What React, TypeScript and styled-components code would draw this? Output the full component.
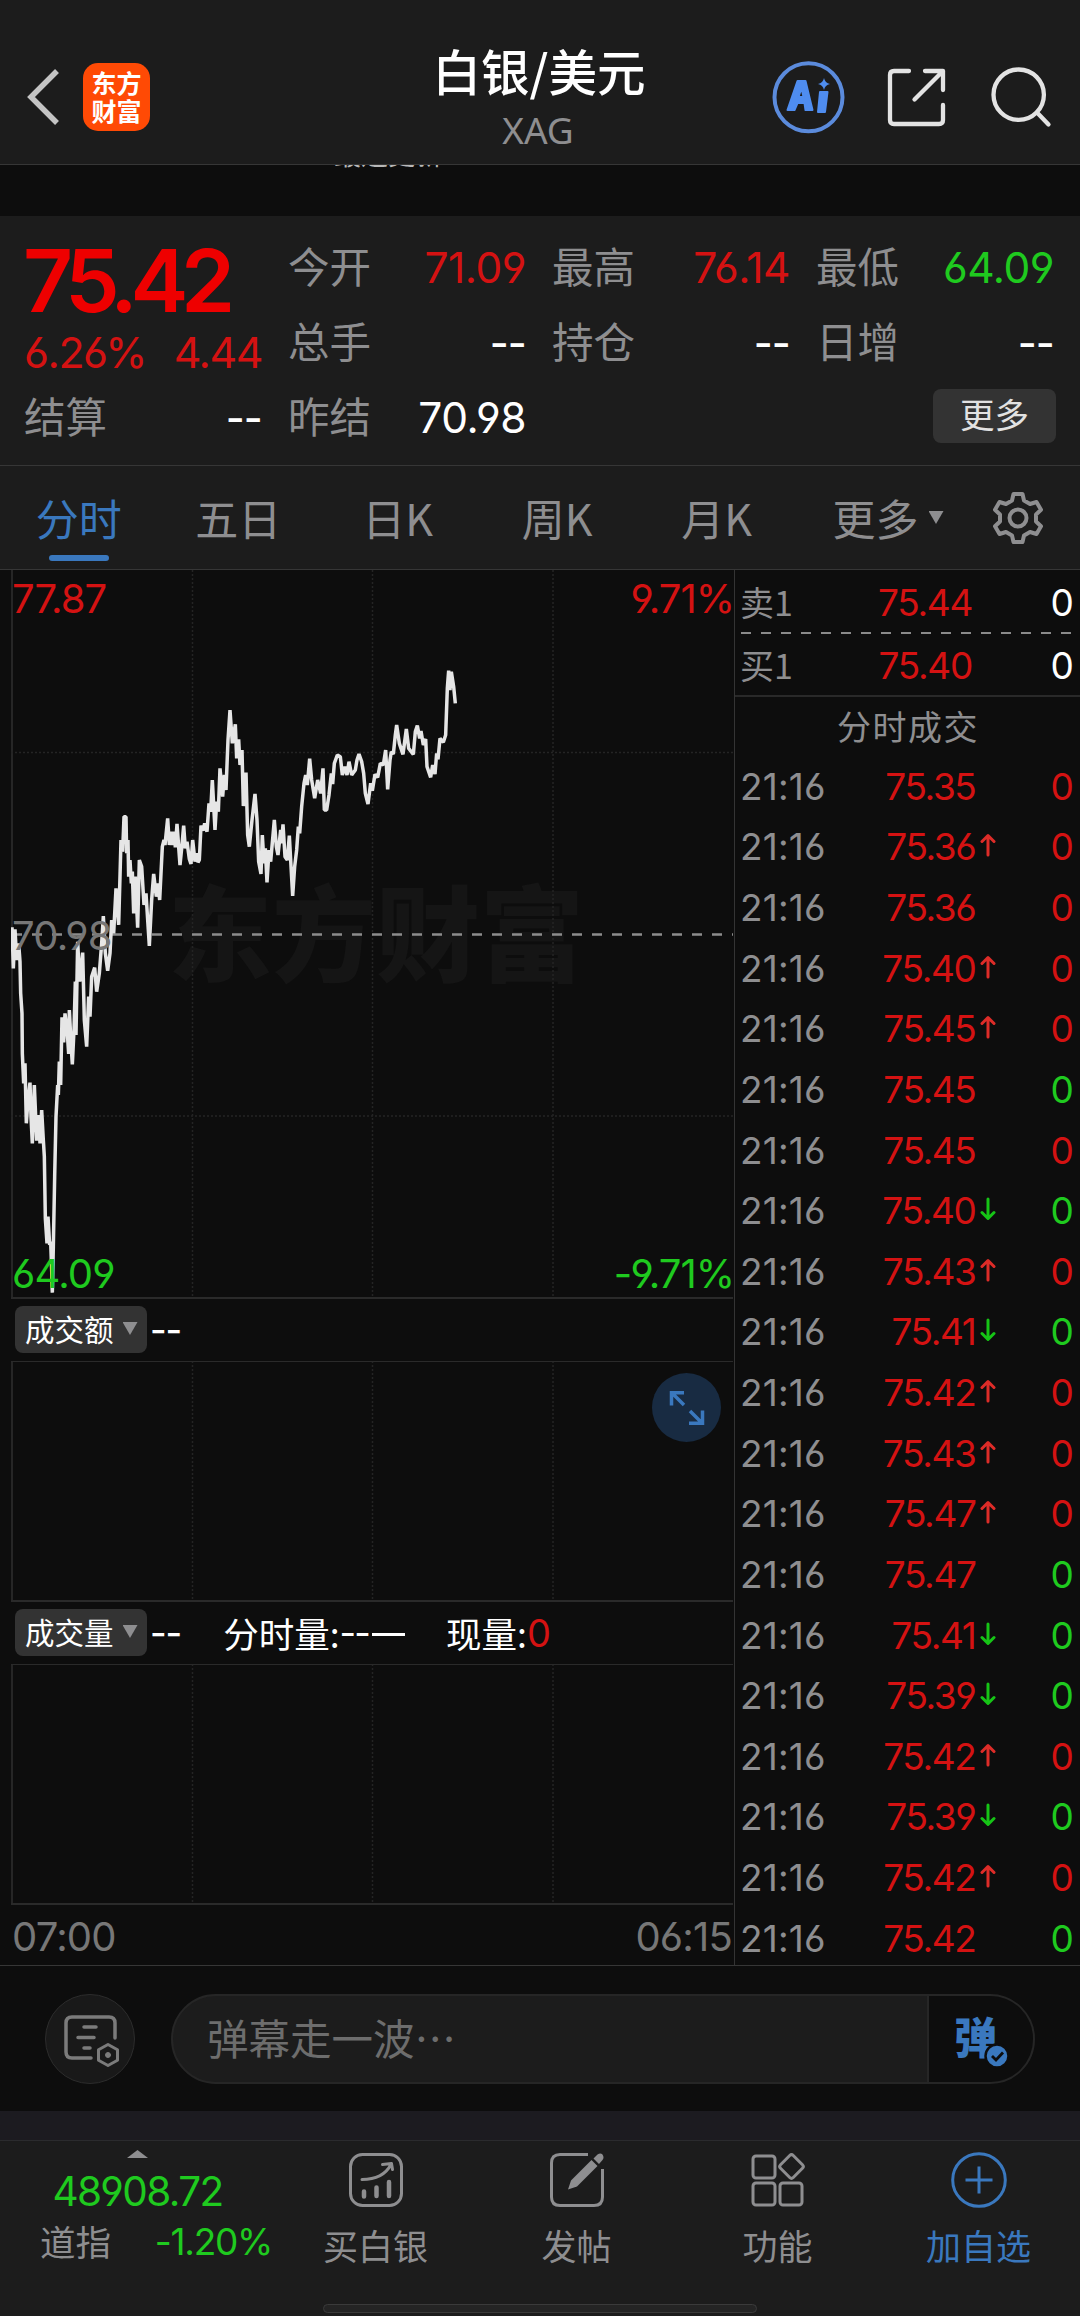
import React from "react";
import styled, { createGlobalStyle } from "styled-components";

const RED = "#d41212";
const GREEN = "#1fca1f";
const GREY = "#8e8e90";
const BLUE = "#3a78be";
const PANEL = "#1c1c1c";
const DARK = "#0d0d0d";
const LINE = "#363636";

const Global = createGlobalStyle`
  * { box-sizing: border-box; }
  body { margin: 0; background: ${DARK}; }
`;

const Screen = styled.div`
  width: 1080px;
  height: 2316px;
  overflow: hidden;
  display: flex;
  flex-direction: column;
  background: ${DARK};
  color: #fff;
  font-family: "Noto Sans", "Noto Sans CJK SC", sans-serif;
`;

const Num = styled.span<{ $size: number; $color?: string; $weight?: number; $ls?: number }>`
  font-family: Inter, sans-serif;
  font-feature-settings: "cv03", "cv04";
  font-size: ${(p) => p.$size}px;
  font-weight: ${(p) => p.$weight ?? 400};
  color: ${(p) => p.$color ?? "#fff"};
  letter-spacing: ${(p) => p.$ls ?? -0.02}em;
  line-height: 1;
  white-space: nowrap;
`;

const Cjk = styled.span<{ $size: number; $color?: string; $weight?: number }>`
  font-family: "Noto Sans CJK SC", sans-serif;
  font-size: ${(p) => p.$size}px;
  font-weight: ${(p) => p.$weight ?? 400};
  color: ${(p) => p.$color ?? GREY};
  line-height: 1.2;
  white-space: nowrap;
`;

/* ---------- header ---------- */
const Header = styled.header`
  flex: none;
  height: 165px;
  padding: 30px 28px 0 26px;
  display: grid;
  grid-template-columns: 1fr auto 1fr;
  background: ${PANEL};
  border-bottom: 1px solid ${LINE};
`;
const HeaderLeft = styled.div`
  display: flex;
  align-items: center;
  gap: 23px;
`;
const HeaderRight = styled.div`
  display: flex;
  align-items: center;
  justify-content: flex-end;
  padding-top: 6px;
`;
const Logo = styled.div`
  width: 67px;
  height: 68px;
  border-radius: 15px;
  background: #ff4a05;
  display: flex;
  flex-direction: column;
  align-items: center;
  justify-content: center;
  font: 700 25px/28px "Noto Sans CJK SC", sans-serif;
  padding-bottom: 2px;
`;
const Titles = styled.div`
  display: flex;
  flex-direction: column;
  align-items: center;
  padding-top: 10px;
`;
const Title = styled.div`
  font: 500 48.5px/60px "Noto Sans CJK SC", sans-serif;
`;
const Code = styled.div`
  font: 400 37px/44px "Noto Sans", sans-serif;
  color: ${GREY};
  padding: 8px 2px 0 0;
`;
const Ticker = styled.div`
  flex: none;
  height: 51px;
  overflow: hidden;
  display: flex;
  padding-left: 334px;
  color: #66666a;
  font: 400 27px/34px "Noto Sans CJK SC", sans-serif;
`;
const TickerText = styled.span`
  margin-top: -28px;
  white-space: pre;
`;
const TickerLabel = styled.span`
  color: #b8b8b8;
`;

/* ---------- quote ---------- */
const Quote = styled.section`
  flex: none;
  height: 250px;
  padding: 15px 26px 0;
  background: ${PANEL};
  border-bottom: 1px solid ${LINE};
  display: grid;
  grid-template-columns: repeat(4, 236px);
  grid-template-rows: 75px 75px 75px;
  column-gap: 28px;
`;
const Main = styled.div`
  grid-row: 1 / 3;
  padding-top: 7px;
  margin-left: -2px;
  display: flex;
  flex-direction: column;
`;
const BigPrice = styled.div`
  height: 86px;
  display: flex;
  align-items: center;
  padding-bottom: 1px;
  margin-left: -1px;
`;
const Change = styled.div`
  display: flex;
  justify-content: space-between;
  align-items: center;
  height: 66px;
`;
const Stat = styled.div`
  display: flex;
  justify-content: space-between;
  align-items: center;
`;
const StatLabel = styled(Cjk)`
  margin: -5px 0 0 -2px;
`;
const MoreCell = styled.div`
  grid-column: 4;
  display: flex;
  justify-content: flex-end;
  align-items: center;
  margin-right: -2px;
`;
const MoreButton = styled.button`
  width: 123px;
  height: 54px;
  padding: 0 0 4px;
  border: 0;
  border-radius: 8px;
  background: #333;
  color: #e2e2e2;
  margin-bottom: 6px;
  font: 400 34.5px/1.2 "Noto Sans CJK SC", sans-serif;
`;

/* ---------- tabs ---------- */
const Tabs = styled.nav`
  flex: none;
  height: 104px;
  background: ${PANEL};
  border-bottom: 1px solid ${LINE};
  display: flex;
  align-items: stretch;
`;
const Tab = styled.div<{ $on?: boolean }>`
  width: 159.5px;
  padding: 21px 2px 0 0;
  display: flex;
  flex-direction: column;
  align-items: center;
  justify-content: space-between;
  color: ${(p) => (p.$on ? BLUE : GREY)};
  font: 400 43px/60px "Noto Sans CJK SC", sans-serif;
`;
const TabBar = styled.i`
  width: 60px;
  height: 6px;
  border-radius: 3px;
  background: ${BLUE};
  margin-bottom: 8px;
`;
const MoreTab = styled.div`
  flex: 1;
  display: flex;
  align-items: center;
  padding: 0 35px 0 35px;
`;
const Triangle = styled.i<{ $w: number; $h: number; $up?: boolean; $ml?: number }>`
  width: ${(p) => p.$w}px;
  height: ${(p) => p.$h}px;
  margin-left: ${(p) => p.$ml ?? 0}px;
  background: ${GREY};
  clip-path: ${(p) => (p.$up ? "polygon(50% 0, 100% 100%, 0 100%)" : "polygon(0 0, 100% 0, 50% 100%)")};
`;
const Gear = styled.svg`
  margin-left: auto;
`;

/* ---------- body ---------- */
const Body = styled.main`
  flex: none;
  height: 1396px;
  display: flex;
  border-bottom: 1px solid ${LINE};
`;
const Charts = styled.div`
  width: 735px;
  border-right: 1px solid #343434;
  display: flex;
  flex-direction: column;
  padding-left: 11px;
`;
const PricePlot = styled.div`
  position: relative;
  height: 729px;
`;
const SubPlot = styled.div`
  position: relative;
  height: 241px;
`;
const PlotSvg = styled.svg`
  display: block;
  position: absolute;
  inset: 0;
`;
const Watermark = styled.div`
  position: absolute;
  left: 157px;
  top: 284px;
  font: 900 104px/150px "Noto Sans CJK SC", sans-serif;
  color: #151515;
`;
const PlotLabel = styled.div<{ $top: number; $right?: boolean }>`
  position: absolute;
  top: ${(p) => p.$top}px;
  ${(p) => (p.$right ? "right: 0;" : "left: 1px;")}
  display: flex;
`;
const SubHead = styled.div`
  height: 62px;
  padding: 0 0 1px 4px;
  display: flex;
  align-items: center;
  color: #fff;
`;
const Chip = styled.div`
  width: 132px;
  height: 47px;
  border-radius: 8px;
  background: #333;
  display: flex;
  align-items: center;
  gap: 9px;
  padding: 0 0 2px 10px;
  margin-right: 3px;
`;
const Metric = styled.div<{ $ml: number }>`
  margin-left: ${(p) => p.$ml}px;
  display: flex;
  align-items: center;
  font: 400 35.5px/44px "Noto Sans CJK SC", sans-serif;
`;
const LongDash = styled.span`
  width: 33px;
  height: 3px;
  overflow: hidden;
  background: #fff;
  color: transparent;
  margin: 4px 0 0 3px;
`;
const Expand = styled.div`
  position: absolute;
  left: 641px;
  top: 12px;
  width: 69px;
  height: 69px;
  border-radius: 50%;
  background: #182b42;
`;
const Axis = styled.div`
  flex: 1;
  display: flex;
  justify-content: space-between;
  align-items: center;
  padding: 4px 2px 0 1px;
`;

const Book = styled.aside`
  flex: 1;
  display: flex;
  flex-direction: column;
  overflow: hidden;
`;
const BookTop = styled.div`
  flex: none;
  height: 127px;
  border-bottom: 2px solid #292929;
  display: flex;
  flex-direction: column;
`;
const Dashes = styled.i`
  height: 2px;
  margin: 0 6px;
  background: repeating-linear-gradient(90deg, #8a8a8a 0 10px, transparent 10px 20px);
`;
const Row = styled.div<{ $priceEnd: number }>`
  flex: 1;
  display: grid;
  grid-template-columns: 100px ${(p) => p.$priceEnd - 105}px 24px 1fr;
  align-items: center;
  padding: 0 7px 0 5px;
`;
const QuoteRow = styled(Row)`
  padding-top: 3px;
`;
const TradeRow = styled(Row)`
  flex: none;
  height: 60.63px;
`;
const End = styled.div`
  display: flex;
  justify-content: flex-end;
`;
const Arrow = styled.svg`
  display: block;
  margin: -3px 0 0 4px;
`;
const BookTitle = styled.div`
  flex: none;
  height: 59px;
  padding: 4px 0 0 1px;
  text-align: center;
  color: ${GREY};
  letter-spacing: 1.5px;
  font: 400 34px/50px "Noto Sans CJK SC", sans-serif;
`;

/* ---------- comment bar ---------- */
const Comment = styled.section`
  flex: none;
  height: 145px;
  padding: 0 45px;
  display: flex;
  align-items: center;
  gap: 36px;
`;
const RoundButton = styled.div`
  width: 90px;
  height: 90px;
  border-radius: 50%;
  background: #191919;
  border: 1px solid #2c2c2c;
`;
const Input = styled.div`
  flex: 1;
  height: 90px;
  border-radius: 45px;
  border: 2px solid #262626;
  background: ${PANEL};
  overflow: hidden;
  display: flex;
`;
const Placeholder = styled.div`
  flex: 1;
  padding: 12px 0 0 34px;
  color: #6d6d6d;
  font: 400 41.5px/58px "Noto Sans CJK SC", sans-serif;
`;
const Toggle = styled.div`
  position: relative;
  width: 106px;
  background: ${DARK};
  border-left: 2px solid #262626;
  color: ${BLUE};
  padding: 10px 0 0 25px;
  font: 900 43px/58px "Noto Sans CJK SC", sans-serif;
`;
const Check = styled.svg`
  position: absolute;
  left: 55px;
  top: 47px;
`;
const Strip = styled.div`
  flex: none;
  height: 30px;
  background: #1c1b20;
  border-bottom: 1px solid #2b2b2e;
`;

/* ---------- bottom bar ---------- */
const Bottom = styled.footer`
  flex: 1;
  background: ${PANEL};
  display: flex;
  flex-direction: column;
  align-items: center;
`;
const Nav = styled.div`
  width: 1080px;
  height: 163px;
  display: flex;
`;
const IndexCell = styled.div`
  width: 275px;
  display: flex;
  flex-direction: column;
  align-items: center;
  padding-top: 9px;
`;
const IndexRow = styled.div`
  width: 100%;
  display: flex;
  align-items: center;
  justify-content: space-between;
  padding: 0 3px 0 40px;
  margin-top: 2px;
`;
const IndexValue = styled.div`
  margin-top: 14px;
  height: 46px;
`;
const NavItem = styled.div<{ $blue?: boolean }>`
  width: 201px;
  display: flex;
  flex-direction: column;
  align-items: center;
  padding-top: 11px;
  color: ${(p) => (p.$blue ? BLUE : GREY)};
  font: 400 35px/44px "Noto Sans CJK SC", sans-serif;
  svg { margin-bottom: 15px; }
`;
const Handle = styled.div`
  width: 434px;
  height: 9px;
  border-radius: 5px;
  background: #242424;
  border: 1px solid #3a3a3a;
`;

/* intraday price samples, three units per pixel */
const prices =
  "36,802 40,925 45,808 50,900 56,850 60,905 62,1000 66,1060 67,1180 71,1270 75,1210 79,1390 84,1320 90,1268 93,1370 97,1450 103,1275 110,1442 117,1365 120,1450 125,1350 130,1440 133,1490 136,1675 141,1750 144,1670 149,1755 152,1745 155,1830 157,1898 160,1760 164,1550 168,1370 173,1275 175,1305 178,1205 182,1275 186,1072 191,1147 195,1060 202,1120 206,1182 208,1050 213,1150 217,1213 222,1110 226,965 228,1125 233,845 239,965 248,878 253,1080 260,1160 266,1010 270,1070 275,950 284,923 290,995 298,940 305,850 310,768 316,880 323,932 330,880 335,780 341,820 348,685 356,795 363,540 368,575 372,470 378,470 380,580 384,540 386,650 390,600 394,670 397,635 401,760 406,650 413,803 418,600 425,620 432,735 438,700 448,858 455,720 461,642 469,710 474,670 479,720 487,560 492,540 495,555 503,475 508,555 513,515 519,555 523,515 526,562 531,492 540,615 546,555 551,497 556,565 561,545 568,597 573,612 578,540 585,605 590,580 594,607 598,600 603,497 609,512 614,490 621,515 627,430 632,455 637,360 645,510 650,425 655,455 660,325 668,410 673,345 678,390 684,240 690,150 697,250 706,193 710,295 716,238 720,315 726,270 730,438 738,338 743,525 748,560 756,480 765,402 771,480 776,605 783,642 787,525 792,610 796,565 801,667 807,570 812,605 823,480 829,560 834,585 842,510 845,550 849,493 855,590 862,600 868,527 872,600 878,708 884,620 890,570 895,500 899,520 905,440 912,370 917,345 922,375 929,296 935,360 944,415 953,360 962,400 969,325 973,450 980,450 987,405 994,340 998,372 1003,310 1012,285 1021,290 1027,345 1035,320 1041,345 1047,305 1055,345 1066,330 1071,300 1077,282 1085,305 1091,340 1096,400 1104,432 1112,370 1117,392 1125,343 1133,352 1141,310 1150,315 1157,270 1163,388 1170,300 1174,275 1180,282 1186,225 1190,195 1198,250 1209,283 1219,207 1226,265 1240,283 1246,215 1252,197 1259,235 1263,213 1270,255 1277,237 1281,320 1292,352 1298,315 1305,342 1310,280 1314,298 1320,235 1330,247 1337,225 1342,85 1346,32 1350,90 1354,35 1361,80 1366,130";

type Trade = [price: string, dir: "" | "u" | "d", vol: "r" | "g"];
const trades: Trade[] = [
  ["75.35", "", "r"],
  ["75.36", "u", "r"],
  ["75.36", "", "r"],
  ["75.40", "u", "r"],
  ["75.45", "u", "r"],
  ["75.45", "", "g"],
  ["75.45", "", "r"],
  ["75.40", "d", "g"],
  ["75.43", "u", "r"],
  ["75.41", "d", "g"],
  ["75.42", "u", "r"],
  ["75.43", "u", "r"],
  ["75.47", "u", "r"],
  ["75.47", "", "g"],
  ["75.41", "d", "g"],
  ["75.39", "d", "g"],
  ["75.42", "u", "r"],
  ["75.39", "d", "g"],
  ["75.42", "u", "r"],
  ["75.42", "", "g"],
];

const GRID_X = [181.5, 361.5, 542];

function Grid({ height }: { height: number }) {
  return (
    <g stroke="#242424" strokeWidth={1.5}>
      {GRID_X.map((x) => (
        <line key={x} x1={x} x2={x} y1={0} y2={height} strokeDasharray="2 2" />
      ))}
      <line x1={1} x2={1} y1={0} y2={height} stroke="#262626" strokeWidth={2} />
      <line x1={0} x2={722} y1={height - 1} y2={height - 1} stroke="#2a2a2a" strokeWidth={2} />
    </g>
  );
}

function StatCell({ label, value, color }: { label: string; value: string; color?: string }) {
  return (
    <Stat>
      <StatLabel $size={41.5}>{label}</StatLabel>
      {value === "--" ? <Dash /> : <Num $size={42.5} $color={color} $ls={-0.012}>{value}</Num>}
    </Stat>
  );
}

function Dash() {
  return (
    <Num $size={41} $ls={-0.02} $weight={500}>
      --
    </Num>
  );
}

export default function App() {
  return (
    <Screen>
      <Global />
      <Header>
        <HeaderLeft>
          <svg width="34" height="60" viewBox="0 0 34 60" fill="none" stroke="#c4c4c4" strokeWidth="5.5">
            <path d="M31 4 5 30 31 56" />
          </svg>
          <Logo>
            <span>东方</span>
            <span>财富</span>
          </Logo>
        </HeaderLeft>
        <Titles>
          <Title>白银/美元</Title>
          <Code>XAG</Code>
        </Titles>
        <HeaderRight>
          <svg width="280" height="100" viewBox="772 50 280 100" fill="none" strokeLinecap="round" strokeLinejoin="round">
            <circle cx="808.5" cy="97.3" r="34" stroke="#5b8bdc" strokeWidth="4" />
            <g fill="#4f8df0" stroke="#4f8df0" strokeWidth="2">
              <path fillRule="evenodd" d="M797.5 81h8l7 29h-7l-1-7h-7l-3 7h-7zM801.500 88l-3 9h5z" />
              <path d="M820 92h7.500l-2.500 20h-7z" />
              <path stroke="none" d="M824 78q1 5 6 6-5 1-6 6-1-5-6-6 5-1 6-6z" />
            </g>
            <g stroke="#e3e3e3" strokeWidth="4.300">
              <path d="M909 71h-15q-4 0-4 4v45q0 4 4 4h45q4 0 4-4v-15M925 71h18v19M943 71l-28.500 28.500" />
              <circle cx="1018.700" cy="94.700" r="25.200" />
              <path d="M1037 112.500l11.500 12" />
            </g>
          </svg>
        </HeaderRight>
      </Header>
      <Ticker>
        <TickerText>
          <TickerLabel>最近更新</TickerLabel>: 2026-01-30 21:16:16
        </TickerText>
      </Ticker>

      <Quote>
        <Main>
          <BigPrice>
            <Num $size={87} $color="#ee0000" $weight={600} $ls={-0.085}>
              75.42
            </Num>
          </BigPrice>
          <Change>
            <Num $size={43} $color={RED} $ls={-0.035}>6.26%</Num>
            <Num $size={43} $color={RED} $ls={-0.035}>4.44</Num>
          </Change>
        </Main>
        <StatCell label="今开" value="71.09" color={RED} />
        <StatCell label="最高" value="76.14" color={RED} />
        <StatCell label="最低" value="64.09" color={GREEN} />
        <StatCell label="总手" value="--" />
        <StatCell label="持仓" value="--" />
        <StatCell label="日增" value="--" />
        <StatCell label="结算" value="--" />
        <StatCell label="昨结" value="70.98" />
        <MoreCell>
          <MoreButton>更多</MoreButton>
        </MoreCell>
      </Quote>

      <Tabs>
        <Tab $on>
          分时
          <TabBar />
        </Tab>
        <Tab>五日</Tab>
        <Tab>日K</Tab>
        <Tab>周K</Tab>
        <Tab>月K</Tab>
        <MoreTab>
          <Cjk $size={43}>更多</Cjk>
          <Triangle $w={15} $h={13} $ml={10} />
          <Gear width="54" height="54" viewBox="0 0 54 54" fill="none" stroke={GREY} strokeWidth="4" strokeLinejoin="round">
            <path d="M22.500 3h9l1.500 6.500 6 3.500 6.500-2 4.500 7.700-5 4.800v7l5 4.800-4.500 7.700-6.500-2-6 3.500-1.500 6.500h-9L21 44.500 15 41l-6.500 2L4 35.300l5-4.800v-7l-5-4.800L8.500 11l6.500 2 6-3.500z" />
            <circle cx="27" cy="27" r="8.500" />
          </Gear>
        </MoreTab>
      </Tabs>

      <Body>
        <Charts>
          <PricePlot>
            <Watermark>东方财富</Watermark>
            <PlotSvg width="722" height="729" fill="none">
              <Grid height={729} />
              <g stroke="#242424" strokeWidth="1.500" strokeDasharray="2 2">
                <path d="M0 182.500H722M0 546H722" />
              </g>
              <path d="M1 364.500H722" stroke="#8c8c8c" strokeWidth="2.500" strokeDasharray="10 10" />
              <g transform="translate(-11 90) scale(.33333)">
                <polyline points={prices} stroke="#e6e6e6" strokeWidth="10.500" strokeLinejoin="bevel" />
              </g>
            </PlotSvg>
            <PlotLabel $top={9}>
              <Num $size={40} $color={RED} $ls={-0.025}>77.87</Num>
            </PlotLabel>
            <PlotLabel $top={9} $right>
              <Num $size={40} $color={RED} $ls={-0.025}>9.71%</Num>
            </PlotLabel>
            <PlotLabel $top={346}>
              <Num $size={40} $color="#777">70.98</Num>
            </PlotLabel>
            <PlotLabel $top={684}>
              <Num $size={40} $color={GREEN}>64.09</Num>
            </PlotLabel>
            <PlotLabel $top={684} $right>
              <Num $size={40} $color={GREEN} $ls={-0.025}>-9.71%</Num>
            </PlotLabel>
          </PricePlot>

          <SubHead>
            <Chip>
              <Cjk $size={29.5} $color="#fff">成交额</Cjk>
              <Triangle $w={15} $h={13} />
            </Chip>
            <Num $size={36} $ls={-0.03} $weight={500}>--</Num>
          </SubHead>
          <SubPlot>
            <PlotSvg width="722" height="241">
              <Grid height={241} />
              <path d="M0 .5H722" stroke="#2a2a2a" />
            </PlotSvg>
            <Expand>
              <svg width="69" height="69" fill="none" stroke={BLUE} strokeWidth="3.500">
                <path d="M19.500 32.500V19.700H32M20 20l12 12M50.500 37.500V50.300H37M50 50 38 38" />
              </svg>
            </Expand>
          </SubPlot>
          <SubHead>
            <Chip>
              <Cjk $size={29.5} $color="#fff">成交量</Cjk>
              <Triangle $w={15} $h={13} />
            </Chip>
            <Num $size={36} $ls={-0.03} $weight={500}>--</Num>
            <Metric $ml={42}>
              分时量:<Num $size={36} $ls={-0.05}>--</Num>
              <LongDash>—</LongDash>
            </Metric>
            <Metric $ml={41}>
              现量:<Num $size={38} $color={RED}>0</Num>
            </Metric>
          </SubHead>
          <SubPlot>
            <PlotSvg width="722" height="241">
              <Grid height={241} />
              <path d="M0 .5H722" stroke="#2a2a2a" />
            </PlotSvg>
          </SubPlot>
          <Axis>
            <Num $size={40} $color="#777">07:00</Num>
            <Num $size={40} $color="#777">06:15</Num>
          </Axis>
        </Charts>

        <Book>
          <BookTop>
            {[
              ["卖1", "75.44"],
              ["买1", "75.40"],
            ].map(([side, price], i) => (
              <React.Fragment key={side}>
                {i === 1 && <Dashes />}
                <QuoteRow $priceEnd={237}>
                  <Cjk $size={34}>{side}</Cjk>
                  <End>
                    <Num $size={37} $color={RED} $ls={-0.035}>{price}</Num>
                  </End>
                  <span />
                  <End>
                    <Num $size={37}>0</Num>
                  </End>
                </QuoteRow>
              </React.Fragment>
            ))}
          </BookTop>
          <BookTitle>分时成交</BookTitle>
          {trades.map(([price, dir, vol], i) => (
            <TradeRow key={i} $priceEnd={240.5}>
              <Num $size={37} $color={GREY} $ls={0.005}>21:16</Num>
              <End>
                <Num $size={37} $color={RED} $ls={-0.037}>{price}</Num>
              </End>
              <span>
                {dir && (
                  <Arrow width="16" height="24" viewBox="0 0 16 24" fill="none" stroke={dir === "u" ? "#dd2c28" : "#16c416"} strokeWidth="3" strokeLinecap="round" strokeLinejoin="round">
                    <path d={dir === "u" ? "M8 22V3M2 8.500 8 2.500 14 8.500" : "M8 2V21M2 15.500 8 21.500 14 15.500"} />
                  </Arrow>
                )}
              </span>
              <End>
                <Num $size={37} $color={vol === "r" ? RED : GREEN}>0</Num>
              </End>
            </TradeRow>
          ))}
        </Book>
      </Body>

      <Comment>
        <RoundButton>
          <svg width="88" height="88" viewBox="0 0 88 88" fill="none" stroke="#7b7b7b" strokeWidth="3.500" strokeLinecap="round" strokeLinejoin="round">
            <path d="M45 63H26q-6 0-6-6V28q0-6 6-6h37q6 0 6 6v15M38 32h12M32 42.500h16M38 53h6" />
            <path d="M62 49.500l9.500 5.300v10.500L62 70.500l-9.500-5.200V54.800z" strokeWidth="3" />
            <circle cx="62" cy="60" r="2.500" fill="#7b7b7b" strokeWidth="1" />
          </svg>
        </RoundButton>
        <Input>
          <Placeholder>弹幕走一波⋯</Placeholder>
          <Toggle>
            弹
            <Check width="26" height="26" viewBox="0 0 26 26" fill="none">
              <circle cx="13" cy="13" r="11.500" fill={BLUE} stroke={DARK} strokeWidth="2.500" />
              <path d="M8 13l4 4 7-7.500" stroke={DARK} strokeWidth="2.800" />
            </Check>
          </Toggle>
        </Input>
      </Comment>
      <Strip />

      <Bottom>
        <Nav>
          <IndexCell>
            <Triangle $w={21} $h={8} $up />
            <IndexValue>
              <Num $size={40.5} $color={GREEN} $ls={-0.04}>48908.72</Num>
            </IndexValue>
            <IndexRow>
              <Cjk $size={35.5}>道指</Cjk>
              <Num $size={37} $color={GREEN} $ls={-0.035}>-1.20%</Num>
            </IndexRow>
          </IndexCell>
          <NavItem>
            <svg width="56" height="56" viewBox="0 0 56 56" fill="none" stroke={GREY} strokeWidth="3" strokeLinecap="round" strokeLinejoin="round">
              <rect x="2.500" y="2.500" width="51" height="51" rx="12" />
              <path d="M14 27.500q21 0 29-15M34.500 12.500 43.500 11.500 44.500 17.500" />
              <path d="M16 39.500v5M28.500 35.500v8.500M41 30v14" strokeWidth="4.500" />
            </svg>
            买白银
          </NavItem>
          <NavItem>
            <svg width="56" height="56" viewBox="0 0 56 56" fill="none" stroke={GREY} strokeWidth="3">
              <path d="M39 2.500H11q-8.500 0-8.500 8.500v34q0 8.500 8.500 8.500h34q8.500 0 8.500-8.500V17" />
              <path fill={GREY} stroke="none" d="M19 37.500l3-9L42.500 8l6 6L28 34.500zM44.500 6.500l4-4q3-2 5 0 2 3 0 5.500l-3.500 4z" />
            </svg>
            发帖
          </NavItem>
          <NavItem>
            <svg width="56" height="56" viewBox="0 0 56 56" fill="none" stroke={GREY} strokeWidth="3" strokeLinejoin="round">
              <rect x="3" y="4" width="22" height="22" rx="3" />
              <rect x="3" y="31" width="22" height="22" rx="3" />
              <rect x="30" y="31" width="22" height="22" rx="3" />
              <rect x="32.500" y="5.500" width="18" height="18" rx="2.500" transform="rotate(45 41.500 14.500)" />
            </svg>
            功能
          </NavItem>
          <NavItem $blue>
            <svg width="56" height="56" viewBox="0 0 56 56" fill="none" stroke={BLUE} strokeWidth="3">
              <circle cx="28" cy="28" r="26.300" />
              <path d="M28 14.500v27M14.500 28h27" />
            </svg>
            加自选
          </NavItem>
        </Nav>
        <Handle />
      </Bottom>
    </Screen>
  );
}
